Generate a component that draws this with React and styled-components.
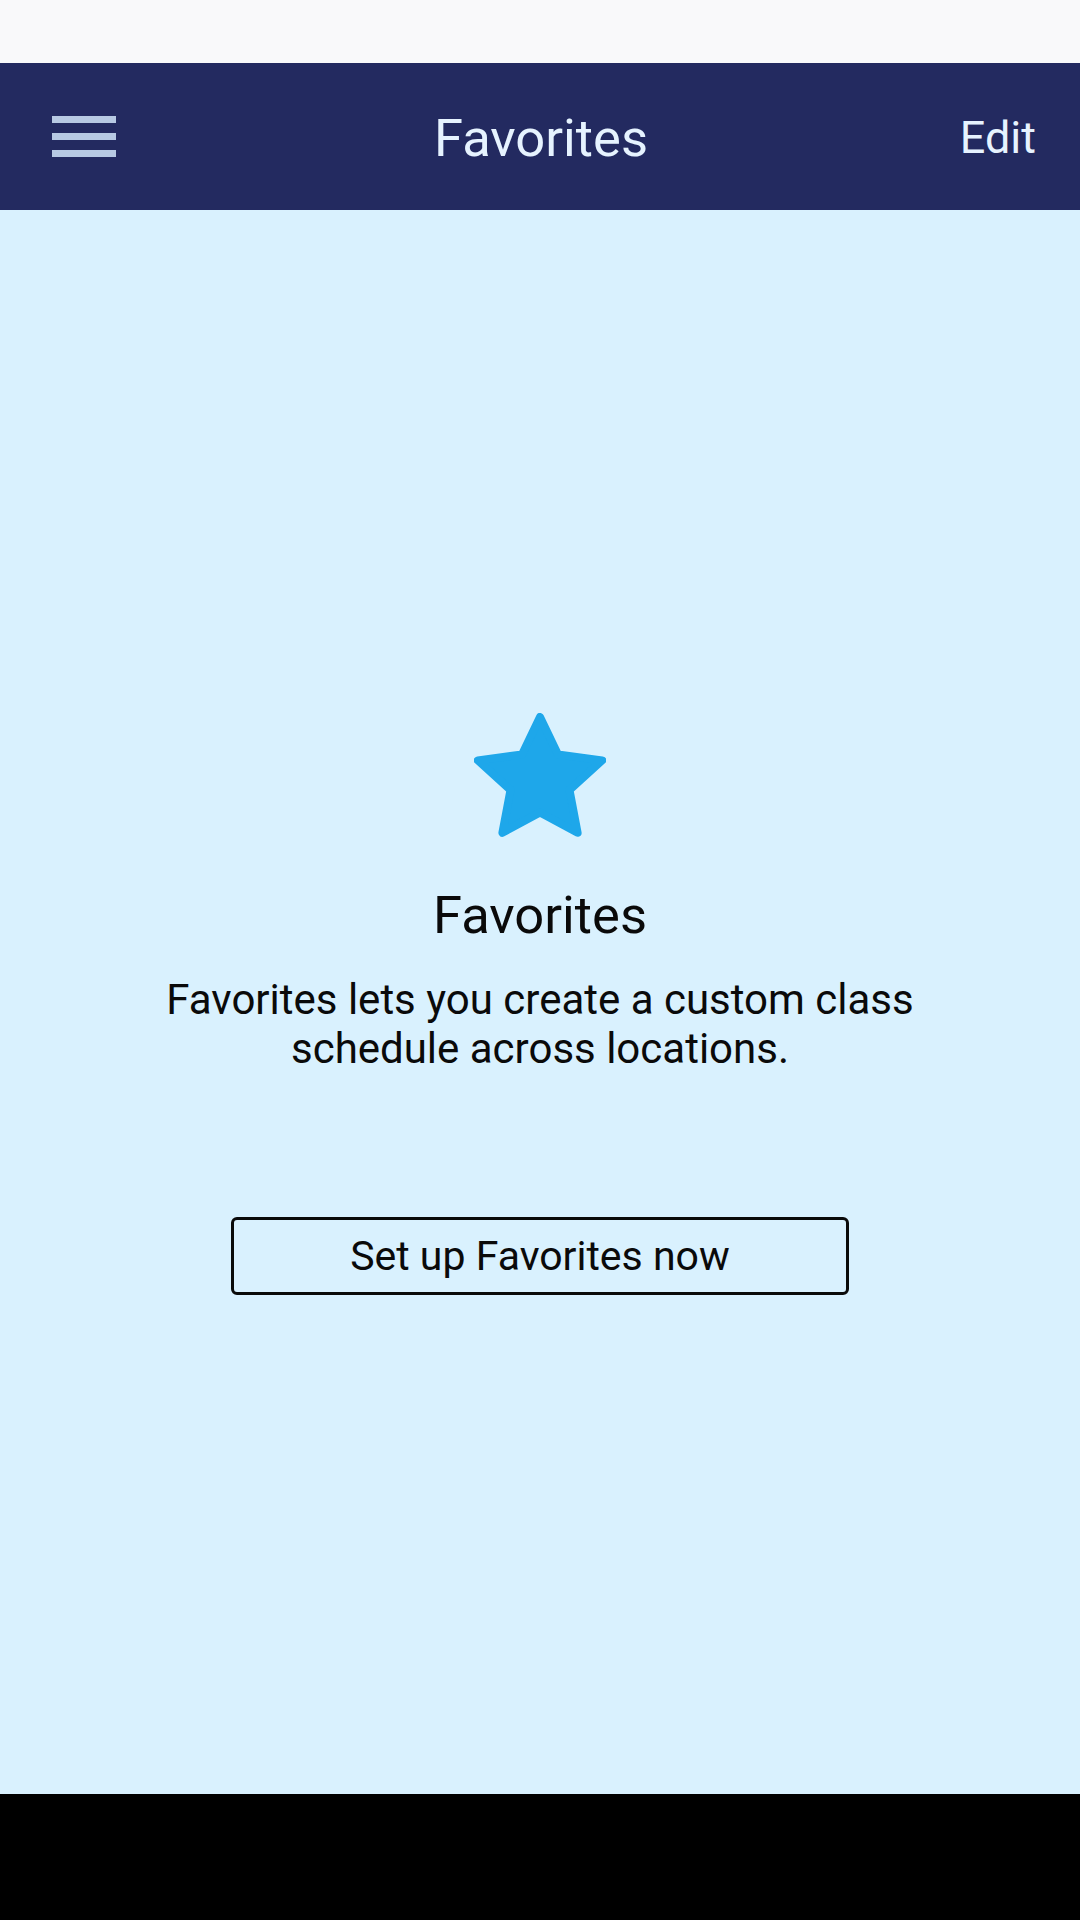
import React from 'react';
import styled, { createGlobalStyle } from 'styled-components';

const App = () => {
  return (
    <Screen>
      <GlobalStyle />
      <StatusBar />
      <Header>
        <MenuButton aria-label="Menu">
          <Bar />
          <Bar />
          <Bar />
        </MenuButton>
        <HeaderTitle>Favorites</HeaderTitle>
        <EditButton>Edit</EditButton>
      </Header>
      <Content>
        <StarIcon viewBox="0 0 132 124" width="132" height="124">
          <polygon
            points="66,4 84,41.5 128.2,47.4 95.5,77 103.6,119.8 66,99.5 28.4,119.8 36.5,77 3.8,47.4 48,41.5"
            fill="#1ea7ea"
            stroke="#1ea7ea"
            strokeWidth="8"
            strokeLinejoin="round"
          />
        </StarIcon>
        <Title>Favorites</Title>
        <Description>
          Favorites lets you create a custom class
          <br />
          schedule across locations.
        </Description>
        <SetupButton>Set up Favorites now</SetupButton>
      </Content>
      <NavBar />
    </Screen>
  );
};

// Styles

const GlobalStyle = createGlobalStyle`
  html, body {
    margin: 0;
    padding: 0;
    background: #d9f1fe;
  }
  body {
    font-family: Roboto, "Liberation Sans", sans-serif;
  }
`;

const Screen = styled.div`
  width: 1080px;
  height: 1920px;
  display: flex;
  flex-direction: column;
  background: #d9f1fe;
`;

const StatusBar = styled.div`
  height: 63px;
  background: #f9f9fa;
`;

const Header = styled.header`
  height: 147px;
  background: #232a60;
  display: grid;
  grid-template-columns: 1fr auto 1fr;
  align-items: center;
  padding: 2px 44px 0 52px;
  box-sizing: border-box;
`;

const MenuButton = styled.div`
  display: flex;
  flex-direction: column;
  gap: 10px;
  width: 64px;
  margin-top: -2px;
`;

const Bar = styled.span`
  display: block;
  height: 7px;
  background: #b7c9e3;
`;

const HeaderTitle = styled.h1`
  margin: 0;
  font-size: 52.5px;
  font-weight: 400;
  color: #e6f3ff;
  transform: translateX(-3px);
`;

const EditButton = styled.span`
  justify-self: end;
  font-size: 45px;
  color: #e6f3ff;
`;

const Content = styled.main`
  flex: 1;
  display: flex;
  flex-direction: column;
  align-items: center;
  justify-content: center;
  padding-top: 4px;
  color: #0a0a0a;
`;

const StarIcon = styled.svg`
  display: block;
  margin-bottom: 47px;
`;

const Title = styled.h2`
  margin: 0 0 29px;
  font-size: 52.5px;
  font-weight: 400;
`;

const Description = styled.p`
  margin: 0 0 144px;
  font-size: 42px;
  text-align: center;
`;

const SetupButton = styled.button`
  width: 618px;
  height: 78px;
  background: transparent;
  border: 3px solid #0a0a0a;
  border-radius: 6px;
  font-family: Roboto, "Liberation Sans", sans-serif;
  font-size: 41px;
  color: #0a0a0a;
  padding: 0;
`;

const NavBar = styled.div`
  height: 126px;
  background: #000;
`;

export default App;
